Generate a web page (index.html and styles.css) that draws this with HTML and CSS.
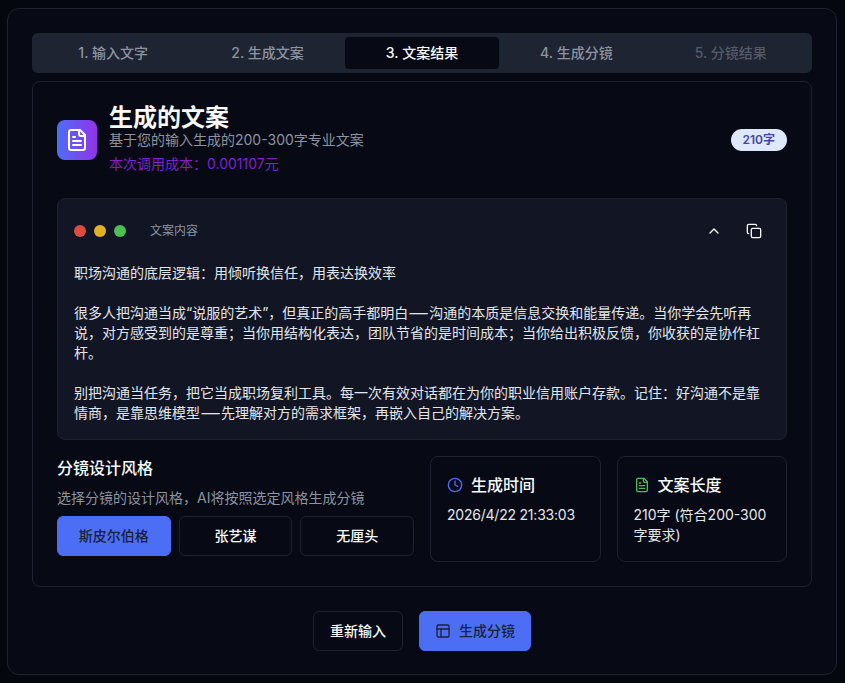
FILE: index.html
```html
<!DOCTYPE html>
<html lang="zh">
<head>
<meta charset="utf-8">
<title>生成的文案</title>
<link rel="stylesheet" href="styles.css">
</head>
<body>
<main class="shell">
  <nav class="tabs">
    <div class="tab">1. 输入文字</div>
    <div class="tab">2. 生成文案</div>
    <div class="tab tab-active">3. 文案结果</div>
    <div class="tab">4. 生成分镜</div>
    <div class="tab tab-disabled">5. 分镜结果</div>
  </nav>
  <section class="card">
    <header class="head">
      <div class="head-left">
        <div class="logo">
          <svg viewBox="0 0 24 24" width="24" height="24" fill="none" stroke="#fff" stroke-width="2" stroke-linecap="round" stroke-linejoin="round"><path d="M15 2H6a2 2 0 0 0-2 2v16a2 2 0 0 0 2 2h12a2 2 0 0 0 2-2V7Z"/><path d="M14 2v4a2 2 0 0 0 2 2h4"/><path d="M10 9H8"/><path d="M16 13H8"/><path d="M16 17H8"/></svg>
        </div>
        <div class="head-text">
          <h1 class="title">生成的文案</h1>
          <p class="subtitle">基于您的输入生成的200-300字专业文案</p>
          <p class="cost">本次调用成本：0.001107元</p>
        </div>
      </div>
      <span class="badge">210字</span>
    </header>
    <div class="doc">
      <div class="doc-bar">
        <div class="dots"><i class="dot dot-r"></i><i class="dot dot-y"></i><i class="dot dot-g"></i></div>
        <span class="doc-label">文案内容</span>
        <div class="doc-tools">
          <span class="tool"><svg viewBox="0 0 24 24" width="16" height="16" fill="none" stroke="currentColor" stroke-width="2" stroke-linecap="round" stroke-linejoin="round"><path d="m18 15-6-6-6 6"/></svg></span>
          <span class="tool"><svg viewBox="0 0 24 24" width="16" height="16" fill="none" stroke="currentColor" stroke-width="2" stroke-linecap="round" stroke-linejoin="round"><rect x="8" y="8" width="14" height="14" rx="2" ry="2"/><path d="M4 16c-1.100 0-2-.9-2-2V4c0-1.100.9-2 2-2h10c1.100 0 2 .9 2 2"/></svg></span>
        </div>
      </div>
      <div class="doc-body">
        <p>职场沟通的底层逻辑：用倾听换信任，用表达换效率</p>
        <p>很多人把沟通当成“说服的艺术”，但真正的高手都明白<span class="dash">—</span>沟通的本质是信息交换和能量传递。当你学会先听再说，对方感受到的是尊重；当你用结构化表达，团队节省的是时间成本；当你给出积极反馈，你收获的是协作杠杆。</p>
        <p>别把沟通当任务，把它当成职场复利工具。每一次有效对话都在为你的职业信用账户存款。记住：好沟通不是靠情商，是靠思维模型<span class="dash">—</span>先理解对方的需求框架，再嵌入自己的解决方案。</p>
      </div>
    </div>
    <div class="bottom">
      <div class="styles">
        <h2 class="styles-title">分镜设计风格</h2>
        <p class="styles-sub">选择分镜的设计风格，AI将按照选定风格生成分镜</p>
        <div class="style-btns">
          <button class="btn btn-primary">斯皮尔伯格</button>
          <button class="btn">张艺谋</button>
          <button class="btn">无厘头</button>
        </div>
      </div>
      <div class="info">
        <div class="info-head">
          <svg class="ic-blue" viewBox="0 0 24 24" width="16" height="16" fill="none" stroke="currentColor" stroke-width="2" stroke-linecap="round" stroke-linejoin="round"><circle cx="12" cy="12" r="10"/><path d="M12 6v6l4 2"/></svg>
          <h3 class="info-title">生成时间</h3>
        </div>
        <p class="info-value info-date">2026/4/22 21:33:03</p>
      </div>
      <div class="info">
        <div class="info-head">
          <svg class="ic-green" viewBox="0 0 24 24" width="16" height="16" fill="none" stroke="currentColor" stroke-width="2" stroke-linecap="round" stroke-linejoin="round"><path d="M15 2H6a2 2 0 0 0-2 2v16a2 2 0 0 0 2 2h12a2 2 0 0 0 2-2V7Z"/><path d="M14 2v4a2 2 0 0 0 2 2h4"/><path d="M10 9H8"/><path d="M16 13H8"/><path d="M16 17H8"/></svg>
          <h3 class="info-title">文案长度</h3>
        </div>
        <p class="info-value">210字 (符合200-300字要求)</p>
      </div>
    </div>
  </section>
  <footer class="actions">
    <button class="btn btn-reset">重新输入</button>
    <button class="btn btn-primary btn-go">
      <svg viewBox="0 0 24 24" width="16" height="16" fill="none" stroke="currentColor" stroke-width="2" stroke-linecap="round" stroke-linejoin="round"><rect x="3" y="3" width="18" height="18" rx="2"/><path d="M3 9h18"/><path d="M9 21V9"/></svg>
      生成分镜
    </button>
  </footer>
</main>
</body>
</html>
```
FILE: styles.css
```css
* { box-sizing: border-box; }
html, body { margin: 0; padding: 0; }
body {
  background: #05070f;
  color: #f8fafc;
  font-family: Inter, "Noto Sans CJK SC", sans-serif;
  font-size: 14px;
  line-height: 20px;
  padding: 8px 8px 8px 7px;
  height: 683px;
  overflow: hidden;
}
h1, h2, h3, p { margin: 0; }
.shell {
  height: 667px;
  background: #070a14;
  border: 1px solid #1e2230;
  border-radius: 12px;
  padding: 24px;
}
.tabs {
  display: grid;
  grid-template-columns: repeat(5, 1fr);
  height: 40px;
  padding: 4px;
  background: #1f2433;
  border-radius: 6px;
}
.tab {
  display: flex;
  align-items: center;
  justify-content: center;
  border-radius: 4px;
  font-weight: 500;
  color: #8c93a1;
}
.tab-active { background: #070a14; color: #f8fafc; }
.tab-disabled { color: #535a69; }
.card {
  margin-top: 8px;
  border: 1px solid #1e2230;
  border-radius: 8px;
  padding: 24px;
}
.head {
  display: flex;
  align-items: center;
  justify-content: space-between;
  margin-bottom: 24px;
}
.head-left { display: flex; align-items: center; gap: 12px; }
.logo {
  width: 40px;
  height: 40px;
  border-radius: 8px;
  background: linear-gradient(90deg, #4c6ef5, #9333ea);
  display: flex;
  align-items: center;
  justify-content: center;
}
.title { font-size: 24px; line-height: 24px; font-weight: 600; color: #f8fafc; }
.subtitle { color: #8c93a1; }
.cost { margin-top: 4px; color: #7e22ce; }
.badge {
  height: 22px;
  padding: 0 12px;
  border-radius: 11px;
  background: #dfe7fd;
  color: #3f48ad;
  font-size: 12px;
  line-height: 22px;
  font-weight: 600;
}
.doc {
  background: #121624;
  border: 1px solid #1e2230;
  border-radius: 8px;
  padding: 16px;
}
.doc-bar { display: flex; align-items: center; height: 32px; margin-bottom: 16px; }
.dots { display: flex; gap: 8px; }
.dot { width: 12px; height: 12px; border-radius: 50%; display: block; }
.dot-r { background: #de4b3f; }
.dot-y { background: #e3b021; }
.dot-g { background: #4cbf56; }
.doc-label { margin-left: 24px; font-size: 12px; color: #8c93a1; }
.doc-tools { margin-left: auto; display: flex; gap: 8px; }
.tool {
  width: 32px;
  height: 32px;
  display: flex;
  align-items: center;
  justify-content: center;
  color: #f8fafc;
}
.doc-body p { color: #e2e6ec; }
.doc-body p + p { margin-top: 20px; }
.dash {
  display: inline-block;
  width: 21px;
  height: 20px;
  text-align: center;
  vertical-align: top;
  transform: scaleX(1.3);
}
.bottom {
  margin-top: 16px;
  display: grid;
  grid-template-columns: repeat(4, 1fr);
  gap: 16px;
}
.styles { grid-column: span 2; }
.styles-title { font-size: 16px; line-height: 24px; font-weight: 500; color: #f8fafc; }
.styles-sub { margin-top: 8px; color: #8c93a1; }
.style-btns {
  margin-top: 8px;
  display: grid;
  grid-template-columns: repeat(3, 1fr);
  gap: 8px;
}
.btn {
  height: 40px;
  border: 1px solid #1e2230;
  border-radius: 6px;
  background: #070a14;
  color: #f8fafc;
  font: 500 14px/20px Inter, "Noto Sans CJK SC", sans-serif;
  padding: 0;
}
.btn-primary { background: #4c6ef5; border-color: #4c6ef5; color: #1a2238; }
.info {
  border: 1px solid #1e2230;
  border-radius: 8px;
  padding: 16px;
}
.info-head { display: flex; align-items: center; gap: 8px; margin-bottom: 8px; }
.info-title { font-size: 16px; line-height: 24px; font-weight: 500; color: #f8fafc; }
.info-value { color: #e2e6ec; }
.info-date { letter-spacing: -0.22px; }
.ic-blue { color: #4c6ef5; }
.ic-green { color: #4cbf56; }
.actions {
  margin-top: 24px;
  display: flex;
  justify-content: center;
  gap: 16px;
}
.btn-reset { width: 90px; }
.btn-go {
  width: 112px;
  display: flex;
  align-items: center;
  justify-content: center;
  gap: 8px;
}
```
